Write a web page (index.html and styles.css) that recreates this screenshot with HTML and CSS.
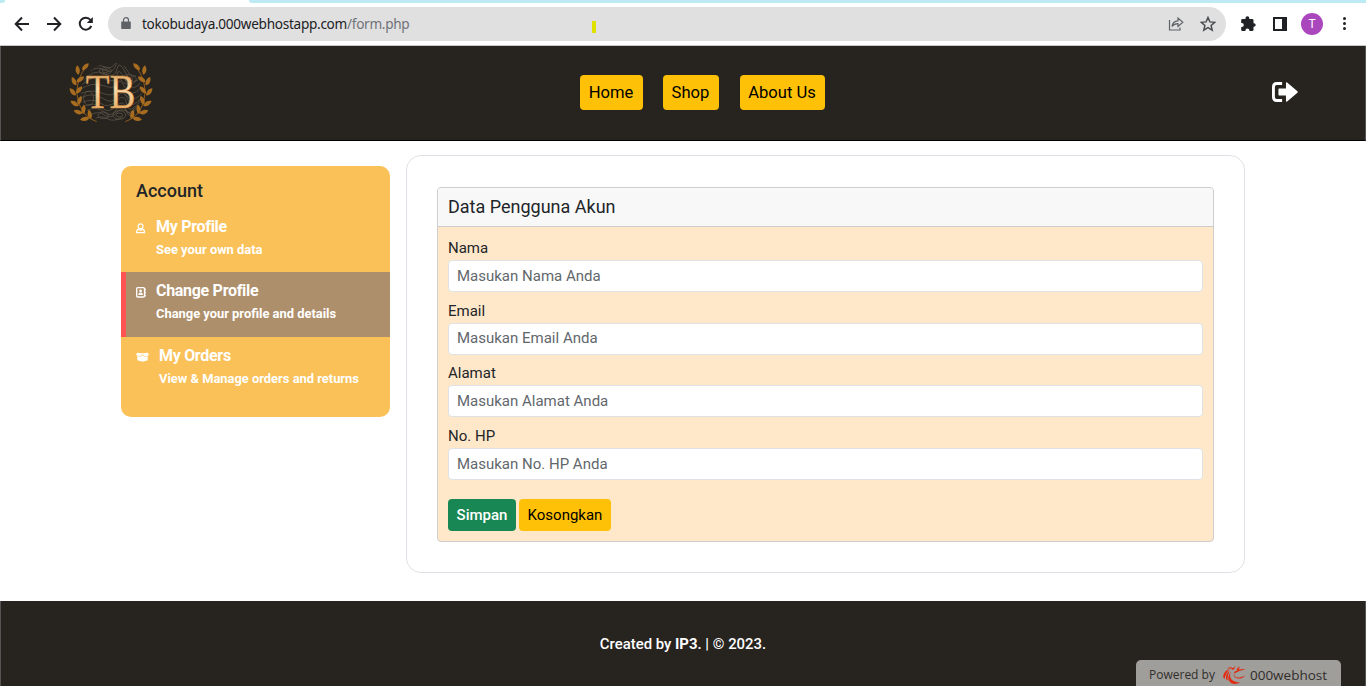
FILE: index.html
```
<!DOCTYPE html>
<html lang="id">
<head>
<meta charset="utf-8">
<title>Toko Budaya</title>
<link rel="stylesheet" href="styles.css">
</head>
<body>
<div class="tabstrip"><span class="tab-edge"></span><span class="tab-rest"></span></div>
<div class="toolbar">
  <svg class="nav-icon" viewBox="0 0 16 16"><path d="M15 8H2M8 1.500 1.700 8 8 14.500"/></svg>
  <svg class="nav-icon" viewBox="0 0 16 16"><path d="M1 8h13M8 1.500 14.300 8 8 14.500"/></svg>
  <svg class="nav-icon" viewBox="0 0 16 16"><path d="M13.300 10A6 6 0 1 1 12.500 4"/><path class="solid" d="M14.800 1v6H8.800z"/></svg>
  <div class="address">
    <svg class="lock" viewBox="0 0 10 13"><path fill="#5f6368" d="M1 4.500h8q.8 0 .8.800v6q0 .8-.8.800H1q-.8 0-.8-.8v-6q0-.8.800-.8z"/><path d="M2.500 5V3a2.500 2.300 0 0 1 5 0v2" fill="none" stroke="#5f6368" stroke-width="1.200"/></svg>
    <span class="url">tokobudaya.000webhostapp.com<span class="path">/form.php</span></span>
    <span class="mark"></span>
    <svg class="share" viewBox="0 0 16 15"><path d="M1.500 4v10h10.500v-2.500M4 10.500C4.500 7 6.500 5 10 4.800V2l4.800 4.200L10 10.400V7.700C7.500 7.700 5.500 8.500 4 10.500z"/></svg>
    <svg class="star" viewBox="0 0 16 16"><path d="m8 1.500 1.900 4.400 4.800.4-3.600 3.200 1.100 4.700L8 11.700l-4.200 2.500 1.100-4.700L1.300 6.300l4.800-.4z"/></svg>
  </div>
  <svg class="puzzle" viewBox="0 0 16 16"><path d="M2.500 3h3V2.200a1.900 1.900 0 0 1 3.800 0V3h2.900q1.300 0 1.300 1.300v2.900h.4a1.800 1.800 0 0 1 0 3.600h-.4v3q0 1.200-1.300 1.200H9.400v-.5a2 2 0 0 0-4 0v.5H2.500q-1.300 0-1.300-1.200v-2.900h.6a2 2 0 0 0 0-4h-.6V4.300Q1.200 3 2.500 3z"/></svg>
  <span class="sidepanel"></span>
  <span class="avatar">T</span>
  <span class="dots"><i></i><i></i><i></i></span>
</div>
<div class="page">
<header class="site-header">
  <svg class="logo" viewBox="51 42 258 198">
    <defs>
      <linearGradient id="gold" x1="0" y1="0" x2="0" y2="1"><stop offset="0" stop-color="#c9822f"/><stop offset=".45" stop-color="#fbdcae"/><stop offset="1" stop-color="#e09a4a"/></linearGradient>
      <clipPath id="disc"><ellipse cx="184" cy="140" rx="91" ry="90"/></clipPath>
      <path id="leaf" d="M0 0C-10-4-12-17-5-28 4-21 6-10 0 0z"/>
      <g id="laurel">
        <path d="M114 58Q92 78 84 112T90 180T140 227" fill="none" stroke="#8f5b1c" stroke-width="3"/>
        <use href="#leaf" transform="translate(86 86) rotate(0)"/><use href="#leaf" transform="translate(97 73) rotate(52)"/>
        <use href="#leaf" transform="translate(79 118) rotate(-18)"/><use href="#leaf" transform="translate(80 109) rotate(62)"/>
        <use href="#leaf" transform="translate(78 148) rotate(-32)"/><use href="#leaf" transform="translate(79 143) rotate(48)"/>
        <use href="#leaf" transform="translate(86 179) rotate(-50)"/><use href="#leaf" transform="translate(85 176) rotate(28)"/>
        <use href="#leaf" transform="translate(98 202) rotate(-62)"/><use href="#leaf" transform="translate(100 204) rotate(14)"/>
        <use href="#leaf" transform="translate(118 215) rotate(-92)"/><use href="#leaf" transform="translate(123 219) rotate(-4)"/>
      </g>
    </defs>
    <g clip-path="url(#disc)" class="contours">
      <path d="M100 95q30-40 60-24t38-15 30 12 40 8M95 108q35-42 68-25t38-14 27 14 48 5M92 119q38-36 72-20t37-12 26 16 48 1M90 131q35-25 70-12t42-7 24 14 50-4M91 143q30-15 64-2t42-4 30 10 50-6M94 155q34-18 64 2t46-6 29 9 44-9M98 169q30-14 54 3t48-8 30 10 42-10M102 181q32-15 53 4t44-4 28 6 35-8M110 194q30-15 52 4t38-8 28 4 28-4M120 207q25-14 44 0t34-6 42 2M132 219q23-12 40-1t46-4M120 74q20-22 42-12t34-10 30 6"/>
      <ellipse cx="166" cy="75" rx="18" ry="10"/><ellipse cx="166" cy="75" rx="9" ry="5"/><ellipse cx="236" cy="100" rx="23" ry="14"/><ellipse cx="236" cy="100" rx="12" ry="7"/><ellipse cx="116" cy="157" rx="15" ry="21"/><ellipse cx="208" cy="207" rx="19" ry="13"/><ellipse cx="208" cy="207" rx="10" ry="6"/><ellipse cx="160" cy="208" rx="16" ry="10"/>
    </g>
    <use href="#laurel" fill="#a86c20"/>
    <use href="#laurel" fill="#a86c20" transform="translate(366 0) scale(-1 1)"/>
    <text x="107" y="185" textLength="149" lengthAdjust="spacingAndGlyphs">TB</text>
  </svg>
  <nav class="menu"><a class="w-home">Home</a><a class="w-shop">Shop</a><a class="w-about">About Us</a></nav>
  <svg class="logout" viewBox="0 0 27 20" preserveAspectRatio="none"><path fill="none" stroke="#fff" stroke-width="3" d="M10.500 1.500H5Q1.500 1.500 1.500 5v10Q1.500 18.500 5 18.500h5.500"/><path fill="#fff" d="M7.500 6.500h7V1q0-1.300 1.200-.5L26.400 9.200q.7.800 0 1.600L15.700 19.500q-1.200.8-1.200-.5v-5.500h-7q-.8 0-.8-.8V7.300q0-.8.800-.8z"/></svg>
</header>
<main class="content">
  <aside class="sidebar">
    <h2>Account</h2>
    <a class="item">
      <svg class="ico" viewBox="0 0 10 11"><path fill="none" stroke="#fff" stroke-width="1.200" d="M4.600.8a2.400 2.400 0 1 1 0 4.900 2.400 2.400 0 0 1 0-4.900zM2.600 6.200Q.6 6.700.6 9.700h8Q8.600 6.700 6.600 6.200 4.600 8 2.600 6.200z"/></svg>
      <span><b>My Profile</b><small>See your own data</small></span>
    </a>
    <a class="item active">
      <svg class="ico" viewBox="0 0 10 11"><rect x=".7" y=".7" width="7.800" height="9.300" rx="1" fill="none" stroke="#fff" stroke-width="1.300"/><circle cx="4.600" cy="3.900" r="1.400" fill="#fff"/><path fill="#fff" d="M2.200 8q0-2.400 2.400-2.400T7 8zM9 1.500h.8v2H9zM9 4.500h.8v2H9zM9 7.500h.8v2H9z"/></svg>
      <span><b>Change Profile</b><small>Change your profile and details</small></span>
    </a>
    <a class="item">
      <svg class="ico box" viewBox="0 0 13 10"><path fill="#fff" d="M1 .8 6.500 1.300 12 .8 13 3.200 8.700 4.300 6.500 2.200 4.300 4.300 0 3.200zM1.300 4l3.300.8 1.900-1.800 1.900 1.800 3.300-.8v4.200L6.500 9.700 1.300 8.200z"/></svg>
      <span><b>My Orders</b><small>View &amp; Manage orders and returns</small></span>
    </a>
  </aside>
  <section class="panel">
    <form class="card">
      <div class="card-title">Data Pengguna Akun</div>
      <div class="fields">
        <label>Nama</label><input placeholder="Masukan Nama Anda">
        <label>Email</label><input placeholder="Masukan Email Anda">
        <label>Alamat</label><input placeholder="Masukan Alamat Anda">
        <label>No. HP</label><input placeholder="Masukan No. HP Anda">
        <div class="actions"><button type="button" class="save">Simpan</button><button type="button" class="clear">Kosongkan</button></div>
      </div>
    </form>
  </section>
</main>
<footer class="site-footer">
  <p>Created by <b>IP3</b>. | © 2023.</p>
  <div class="powered"><span class="by">Powered by</span>
    <svg viewBox="0 0 24 20"><g fill="#e32b12"><path d="M9 7C6.500 12 9 17 18 17.500 10 22 2 15 9 7zM12 8c0 5 4 6 11 2.500C21 15 10 15 12 8zM12 7q6-4 11.500-2.500-6 .5-11 4zM1 12Q2 5 8 4 4 7 2.500 14zM4 14Q3.500 8 8 6 5.500 9 5.500 16zM5 3.500q3-2 5-1l-1 1zM9.500 3q3 .5 4-2.500-.5 5-4 4zM14.500 4q2.500-1 2.500-3 1.500 3-1.500 4.500z"/></g></svg>
    <span class="host">000webhost</span></div>
</footer>
</div>
</body>
</html>
```
FILE: styles.css
```
* { box-sizing: border-box; }
body { margin: 0; height: 688px; overflow: hidden; background: #fff; font-family: Roboto, sans-serif; color: #212529; }
.tabstrip { display: flex; justify-content: space-between; height: 3px; }
.tab-edge { width: 5px; background: #bcebf3; border-bottom-right-radius: 4px; }
.tab-rest { width: 1117px; background: #bcebf3; border-bottom-left-radius: 4px; }
.toolbar { display: flex; align-items: center; height: 43px; padding: 0 0 1px 14px; border-bottom: 1px solid #c9c9c9; }
.nav-icon { width: 16px; height: 16px; margin-right: 16px; fill: none; stroke: #202124; stroke-width: 2; }
.nav-icon .solid { fill: #202124; stroke: none; }
.nav-icon:nth-of-type(3) { margin-right: 14px; }
.address { display: flex; align-items: center; width: 1118px; height: 34px; border-radius: 17px; background: #e0e0e0; padding: 0 10px 0 13px; }
.lock { width: 10px; height: 13px; margin: -1px 11px 0 0; }
.url { width: 450px; font: 13.6px/20px "Noto Sans", sans-serif; color: #202124; letter-spacing: -0.29px; }
.path { color: #707378; }
.mark { width: 4px; height: 12px; margin: 7px auto 0 0; background: #e1e100; }
.share { width: 16px; height: 15px; margin-right: 16px; fill: none; stroke: #5f6368; stroke-width: 1.2; }
.star { width: 16px; height: 16px; fill: none; stroke: #4a4d51; stroke-width: 1.5; }
.puzzle { width: 16px; height: 16px; margin: 0 17px 0 14px; fill: #202124; }
.sidepanel { width: 14px; height: 14px; border: 2px solid #202124; border-right-width: 5px; }
.avatar { width: 22px; height: 22px; margin: 0 20px 0 14px; border-radius: 50%; background: #ab47bc; color: #fff; font-size: 12px; line-height: 22px; text-align: center; }
.dots { display: flex; flex-direction: column; gap: 2px; }
.dots i { width: 3px; height: 3px; border-radius: 50%; background: #202124; }
.page { height: 640px; }
.site-header { display: flex; align-items: flex-start; justify-content: space-between; height: 95px; padding: 14px 67px 0; background: #27241f; border: solid #555; border-width: 0 1px; border-bottom: 1px solid #000; }
.logo { width: 86px; height: 66px; margin-left: -1px; }
.contours { fill: none; stroke: #665c4e; stroke-width: 2; }
.logo text { font: 148px "Liberation Serif", serif; fill: url(#gold); stroke: #d28b3c; stroke-width: 1.5; }
.menu { display: flex; margin: 15px 0 0 -21px; width: 245px; justify-content: space-between; }
.menu a { height: 35px; border-radius: 4px; background: #ffc107; color: #000; font-size: 16.6px; line-height: 36px; text-align: center; }
.w-home { width: 63px; }
.w-shop { width: 56px; margin-left: -1px; }
.w-about { width: 85px; }
.logout { width: 26px; height: 20px; margin-top: 22px; }
.content { display: flex; align-items: flex-start; gap: 16px; height: 460px; padding: 14px 121px 0; }
.sidebar { width: 269px; height: 251px; margin-top: 11px; border-radius: 10px; background: #fac158; overflow: hidden; }
.sidebar h2 { height: 42px; margin: 0; padding: 14px 15px 0; font-size: 18px; font-weight: 500; line-height: 22px; }
.item { display: flex; height: 64px; padding: 8px 0 0 15px; color: #fff; }
.item.active { height: 65px; padding-left: 10px; border-left: 5px solid #ff5252; background: #ae8f6b; }
.ico { width: 10px; height: 11px; margin: 7px 10px 0 0; }
.ico.box { width: 13px; height: 10px; }
.item b, .item small { display: block; white-space: nowrap; }
.item b { font-size: 16px; font-weight: 700; line-height: 22px; letter-spacing: -0.3px; }
.item small { font-size: 12.9px; font-weight: 700; line-height: 20px; margin-top: 2px; }
.panel { width: 839px; height: 418px; padding: 31px 30px; border: 1px solid #dee2e6; border-radius: 15px; }
.card { width: 777px; height: 355px; border: 1px solid #cecece; border-radius: 4px; overflow: hidden; background: #ffe8ca; }
.card-title { height: 39px; padding-left: 10px; border-bottom: 1px solid #cecece; background: #f8f8f8; font-size: 18px; line-height: 38px; }
.fields { padding: 10px; }
.fields label { display: block; height: 23px; font-size: 15px; line-height: 22px; }
.fields input { display: block; width: 755px; height: 32px; margin-bottom: 7.7px; padding: 0 8px 1px; border: 1px solid #dee2e6; border-radius: 4px; background: #fff; font: 15px Roboto, sans-serif; }
.fields input::placeholder { color: #62676c; opacity: 1; }
.actions { display: flex; gap: 3px; padding-top: 11px; }
.actions button { height: 32px; padding: 0; border: 0; border-radius: 4px; font: 15px Roboto, sans-serif; }
.actions .save { width: 68px; background: #198754; color: #fff; font-weight: 500; }
.actions .clear { width: 92px; background: #ffc107; color: #000; }
.site-footer { position: relative; height: 85px; background: #27241f; border: solid #555; border-width: 0 1px; color: #fff; text-align: center; }
.site-footer p { margin: 0; padding-top: 32px; font-size: 14.9px; font-weight: 500; line-height: 22px; }
.site-footer p b { font-weight: 700; }
.powered { position: absolute; right: 24px; bottom: 0; display: flex; align-items: center; width: 205px; height: 26px; padding: 3px 0 0 13px; border-radius: 5px 5px 0 0; background: #a09e9b; color: #302e2b; font: 12px "Open Sans", sans-serif; }
.powered svg { width: 24px; height: 20px; margin: 0 4px 0 7px; }
.powered .host { font-size: 13.5px; font-weight: 500; }
```
